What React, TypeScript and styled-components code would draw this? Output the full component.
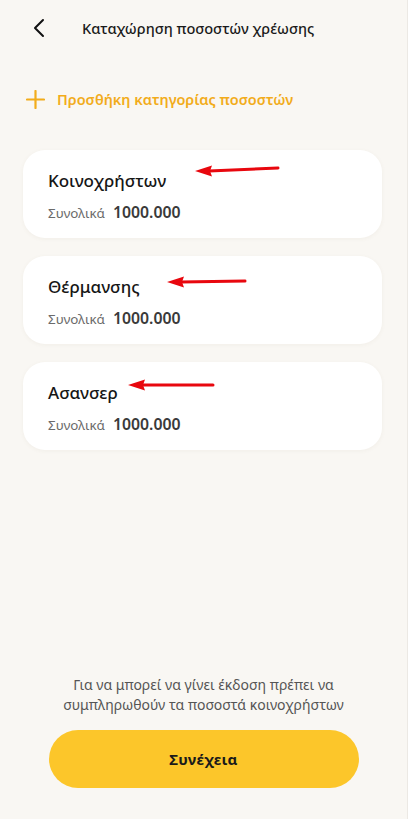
import React from "react";
import styled, { createGlobalStyle } from "styled-components";

const Global = createGlobalStyle`
  html, body { margin: 0; padding: 0; background: #F9F7F3; }
  body { font-family: "Noto Sans", "Open Sans", sans-serif; color: #1c1c1c; }
  * { box-sizing: border-box; }
`;

const Page = styled.div`
  width: 408px;
  min-height: 819px;
  display: flex;
  flex-direction: column;
  background: #F9F7F3;
  border-right: 1px solid #ECE9E4;
`;

const Header = styled.header`
  height: 56px;
  display: flex;
  align-items: center;
  padding-left: 27px;
`;

const BackButton = styled.button`
  width: 24px;
  height: 24px;
  padding: 0;
  border: none;
  background: none;
  display: flex;
  align-items: center;
  justify-content: center;
  margin-right: 31px;
  cursor: pointer;
`;

const Title = styled.h1`
  margin: 0;
  font-size: 14.6px;
  font-weight: 500;
  color: #1a1a1a;
  letter-spacing: 0;
`;

const AddLink = styled.button`
  margin-top: 33px;
  margin-left: 26px;
  align-self: flex-start;
  display: flex;
  align-items: center;
  gap: 12px;
  border: none;
  background: none;
  padding: 0;
  font-family: inherit;
  font-size: 14.5px;
  font-weight: 600;
  color: #F2AC1B;
  cursor: pointer;
`;

const List = styled.div`
  margin: 41px 25px 0 23px;
  display: flex;
  flex-direction: column;
  gap: 18px;
`;

const Card = styled.div`
  position: relative;
  height: 88px;
  background: #fff;
  border-radius: 22px;
  padding: 20px 25px 0;
  box-shadow: 0 1px 4px rgba(120, 100, 70, 0.06);
`;

const CardTitle = styled.div`
  font-size: 17px;
  font-weight: 500;
  color: #161616;
  line-height: 22px;
`;

const TotalRow = styled.div`
  margin-top: 9px;
  display: flex;
  align-items: baseline;
  gap: 8px;
`;

const TotalLabel = styled.span`
  font-size: 13.4px;
  color: #6b6b6b;
`;

const TotalValue = styled.span`
  font-size: 15.8px;
  font-weight: 600;
  color: #3a3a3a;
`;

const Arrow = styled.svg`
  position: absolute;
  overflow: visible;
  pointer-events: none;
`;

const Footer = styled.div`
  margin-top: auto;
  padding: 0 48px 31px 48px;
  display: flex;
  flex-direction: column;
  align-items: center;
`;

const Note = styled.p`
  margin: 0 0 15px;
  text-align: center;
  font-size: 14px;
  line-height: 20px;
  color: #555;
  width: 300px;
`;

const Continue = styled.button`
  width: 310px;
  height: 58px;
  border: none;
  border-radius: 29px;
  background: #FCC62A;
  font-family: inherit;
  font-size: 15px;
  font-weight: 700;
  color: #1a1a1a;
  letter-spacing: 0.3px;
  cursor: pointer;
`;

type ArrowSpec = { left: number; top: number; length: number; tilt: number };

const RedArrow: React.FC<ArrowSpec> = ({ left, top, length, tilt }) => (
  <Arrow
    width={length}
    height={12}
    viewBox={`0 0 ${length} 12`}
    style={{ left, top }}
  >
    <line
      x1={14}
      y1={6}
      x2={length - 1}
      y2={6 - tilt}
      stroke="#E8070E"
      strokeWidth={3}
      strokeLinecap="round"
    />
    <polygon points={`0,6 17,0.5 15,6 17,11.5`} fill="#E8070E" />
  </Arrow>
);

const categories = [
  { name: "Κοινοχρήστων", total: "1000.000", arrow: { left: 172, top: 15, length: 84, tilt: 3 } },
  { name: "Θέρμανσης", total: "1000.000", arrow: { left: 144, top: 20, length: 79, tilt: 1 } },
  { name: "Ασανσερ", total: "1000.000", arrow: { left: 105, top: 17, length: 86, tilt: 0 } },
];

export default function App() {
  return (
    <>
      <Global />
      <Page>
        <Header>
          <BackButton aria-label="Πίσω">
            <svg width="14" height="20" viewBox="0 0 14 20">
              <path d="M11 2 L3 10 L11 18" fill="none" stroke="#111" strokeWidth="2" strokeLinecap="round" strokeLinejoin="round" />
            </svg>
          </BackButton>
          <Title>Καταχώρηση ποσοστών χρέωσης</Title>
        </Header>
        <AddLink>
          <svg width="19" height="19" viewBox="0 0 19 19">
            <path d="M9.5 1 V18 M1 9.5 H18" stroke="#F2AC1B" strokeWidth="2.2" strokeLinecap="round" />
          </svg>
          Προσθήκη κατηγορίας ποσοστών
        </AddLink>
        <List>
          {categories.map((c) => (
            <Card key={c.name}>
              <CardTitle>{c.name}</CardTitle>
              <TotalRow>
                <TotalLabel>Συνολικά</TotalLabel>
                <TotalValue>{c.total}</TotalValue>
              </TotalRow>
              <RedArrow {...c.arrow} />
            </Card>
          ))}
        </List>
        <Footer>
          <Note>Για να μπορεί να γίνει έκδοση πρέπει να συμπληρωθούν τα ποσοστά κοινοχρήστων</Note>
          <Continue>Συνέχεια</Continue>
        </Footer>
      </Page>
    </>
  );
}
